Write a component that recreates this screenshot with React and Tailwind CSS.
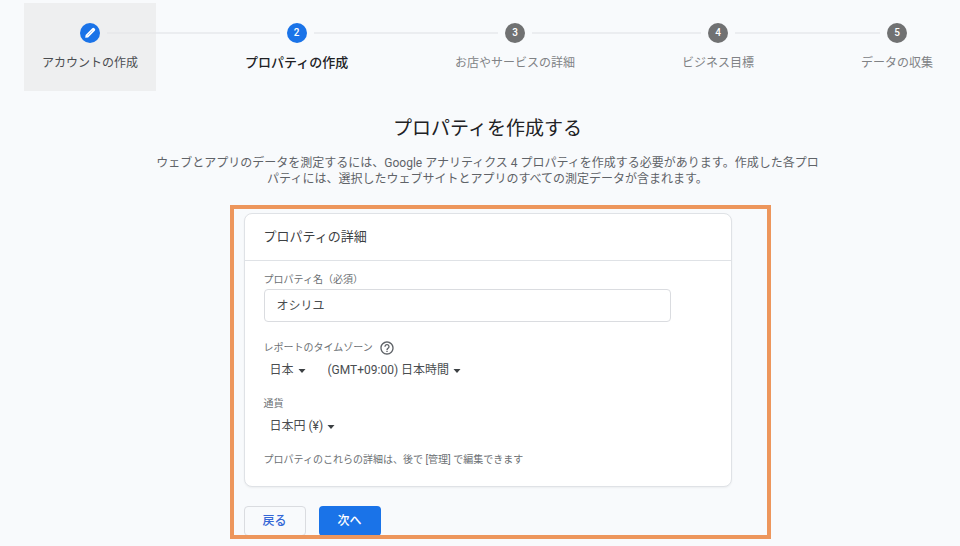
import { Fragment } from "react";

const STEPS = [
  { id: 1, label: "アカウントの作成", status: "done" },
  { id: 2, label: "プロパティの作成", status: "current" },
  { id: 3, label: "お店やサービスの詳細", status: "pending" },
  { id: 4, label: "ビジネス目標", status: "pending" },
  { id: 5, label: "データの収集", status: "pending" },
];

const STEP_STYLES = {
  done: "bg-[#eeeff0] text-[#4a4d50] text-[12px]",
  current: "text-[#202124] text-[13px] font-medium",
  pending: "text-[#808285] text-[12px]",
};

const CIRCLE_STYLES = {
  done: "bg-[#1a73e8]",
  current: "bg-[#1a73e8]",
  pending: "bg-[#707172]",
};

function PencilIcon() {
  return (
    <svg viewBox="0 0 20 20" className="h-5 w-5" aria-hidden="true">
      <path
        d="M5.2 14.8l.4-2.9 6.7-6.7a1.4 1.4 0 0 1 2 0l.5.5a1.4 1.4 0 0 1 0 2l-6.7 6.7z"
        fill="#fff"
      />
      <path d="M7.6 12.4l4.8-4.8" stroke="#8ab4f0" strokeWidth="0.7" />
    </svg>
  );
}

function HelpIcon() {
  return (
    <svg viewBox="0 0 24 24" className="h-4 w-4" fill="#5f6368" aria-hidden="true">
      <path d="M11 18h2v-2h-2v2zm1-16C6.48 2 2 6.48 2 12s4.48 10 10 10 10-4.48 10-10S17.52 2 12 2zm0 18c-4.41 0-8-3.59-8-8s3.59-8 8-8 8 3.59 8 8-3.59 8-8 8zm0-14c-2.21 0-4 1.79-4 4h2c0-1.1.9-2 2-2s2 .9 2 2c0 2-3 1.75-3 5h2c0-2.25 3-2.5 3-5 0-2.21-1.79-4-4-4z" />
    </svg>
  );
}

function StepLine({ hidden, faint }) {
  if (hidden) return <span className="flex-1" />;
  return (
    <span
      className={`h-0.5 flex-1 ${faint ? "bg-[#e8e9eb]" : "bg-[#ebedf0]"}`}
    />
  );
}

function Step({ step, first, last }) {
  return (
    <button
      type="button"
      aria-current={step.status === "current" ? "step" : undefined}
      className={`px-[18px] pt-5 pb-5 leading-4 ${STEP_STYLES[step.status]}`}
    >
      <span className="-mx-[18px] flex items-center gap-[7px]">
        <StepLine hidden={first} />
        <span
          className={`flex h-5 w-5 items-center justify-center rounded-full text-[10px] font-medium text-white ${CIRCLE_STYLES[step.status]}`}
        >
          {step.status === "done" ? <PencilIcon /> : step.id}
        </span>
        <StepLine hidden={last} faint={step.status === "done"} />
      </span>
      <span className="mt-3 block whitespace-nowrap">{step.label}</span>
    </button>
  );
}

function Stepper() {
  return (
    <nav className="flex items-start">
      {STEPS.map((step, index) => (
        <Fragment key={step.id}>
          {index > 0 && (
            <span className="mt-[29px] h-0.5 flex-1 bg-[#ebedf0]" />
          )}
          <Step
            step={step}
            first={index === 0}
            last={index === STEPS.length - 1}
          />
        </Fragment>
      ))}
    </nav>
  );
}

function Dropdown({ id, label, value }) {
  return (
    <div className="relative">
      <select
        id={id}
        aria-label={label}
        defaultValue={value}
        className="block appearance-none pr-[11px] text-[12px] leading-4 text-[#4a4d50]"
      >
        <option>{value}</option>
      </select>
      <svg
        viewBox="0 0 8 4"
        className="pointer-events-none absolute top-[7px] right-0 h-1 w-2"
        aria-hidden="true"
      >
        <path d="M0.5 0h7L4 4z" fill="#3c4043" />
      </svg>
    </div>
  );
}

function PropertyCard() {
  return (
    <section className="rounded-lg border border-[#dfe2e6] bg-white shadow-xs">
      <h2 className="border-b border-[#dfe2e6] px-[19px] py-3 text-[13px] leading-[22px] text-[#3c4043]">
        プロパティの詳細
      </h2>
      <div className="px-[19px] pt-[11px] pb-[18px] text-[10px] leading-4 text-[#6b6f73]">
        <label htmlFor="name" className="block">
          プロパティ名（必須）
        </label>
        <input
          id="name"
          type="text"
          defaultValue="オシリユ"
          className="mt-px block h-[33px] w-10/11 rounded border border-[#dadce0] px-3 pb-0.5 text-[12px] text-[#4a4d50]"
        />
        <div className="mt-[18px] flex items-center gap-[6px]">
          <label htmlFor="country">レポートのタイムゾーン</label>
          <button type="button" aria-label="ヘルプ">
            <HelpIcon />
          </button>
        </div>
        <div className="mt-[6px] flex gap-[22px] pl-[6px]">
          <Dropdown id="country" value="日本" />
          <Dropdown
            id="timezone"
            label="タイムゾーン"
            value="(GMT+09:00) 日本時間"
          />
        </div>
        <label htmlFor="currency" className="mt-[18px] block">
          通貨
        </label>
        <div className="mt-[6px] flex pl-[6px]">
          <Dropdown id="currency" value="日本円 (¥)" />
        </div>
        <p className="mt-[18px]">
          プロパティのこれらの詳細は、後で [管理] で編集できます
        </p>
      </div>
    </section>
  );
}

export default function App() {
  return (
    <div className="min-h-screen bg-[#f8fafc] pt-[3px] pr-[9px] pl-6 font-[Roboto,'Noto_Sans_CJK_JP',sans-serif]">
      <Stepper />
      <main>
        <h1 className="mt-6 text-center text-[19px] leading-7 text-[#202124]">
          プロパティを作成する
        </h1>
        <p className="mt-3 text-center text-[12px] leading-4 text-[#5f6368]">
          ウェブとアプリのデータを測定するには、Google アナリティクス 4
          プロパティを作成する必要があります。作成した各プロ
          <br />
          パティには、選択したウェブサイトとアプリのすべての測定データが含まれます。
        </p>
        <div className="relative mx-auto mt-[26px] max-w-[488px]">
          <PropertyCard />
          <div className="mt-[19px] flex gap-[13px] text-[12px] font-medium">
            <button
              type="button"
              className="h-[30px] w-[62px] rounded-sm border border-[#dadce0] text-[#3367d6]"
            >
              戻る
            </button>
            <button
              type="button"
              className="h-[30px] w-[62px] rounded-sm bg-[#1a73e8] text-white"
            >
              次へ
            </button>
          </div>
          <div className="pointer-events-none absolute -top-2 -right-[39px] -bottom-[3px] -left-[14px] border-4 border-[#ed965c]" />
        </div>
      </main>
    </div>
  );
}
